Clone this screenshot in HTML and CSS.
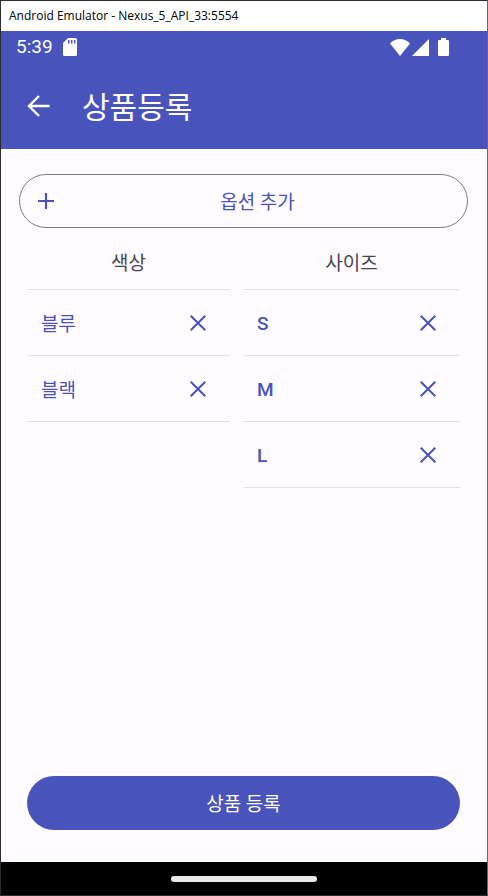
FILE: index.html
```html
<!DOCTYPE html>
<html lang="ko">
<head>
<meta charset="utf-8">
<meta name="viewport" content="width=device-width, initial-scale=1">
<title>Android Emulator - Nexus_5_API_33:5554</title>
<link rel="stylesheet" href="styles.css">
</head>
<body>
<div class="window">
  <div class="window-title">Android Emulator - Nexus_5_API_33:5554</div>
  <div class="status-bar">
    <span class="clock">5:39</span>
    <svg class="sd-icon" width="14" height="18" viewBox="0 0 14 18" aria-hidden="true"><path fill="currentColor" fill-rule="evenodd" d="M5 0h7.500Q14 0 14 1.500v15Q14 18 12.500 18h-11Q0 18 0 16.500V5zM5 2v3.500h1.500V2zM8 2v3.500h1.500V2zM11 2v3.500h1.500V2z"/></svg>
    <span class="status-icons">
      <svg width="20" height="17" viewBox="0 0 20 17" aria-hidden="true"><path fill="currentColor" d="M0 4.500Q4.200 0 10 0t10 4.500L10 17z"/></svg>
      <svg width="17" height="17" viewBox="0 0 17 17" aria-hidden="true"><path fill="currentColor" d="M17 0v17H0z"/></svg>
      <svg class="battery" width="11" height="18" viewBox="0 0 11 18" aria-hidden="true"><path fill="currentColor" d="M3 0h5v2h2q1 0 1 1v14q0 1-1 1H1q-1 0-1-1V3q0-1 1-1h2z"/></svg>
    </span>
  </div>
  <header class="app-bar">
    <button class="back" type="button" aria-label="뒤로"><svg width="23" height="22" viewBox="0 0 23 22" aria-hidden="true"><path fill="none" stroke="currentColor" stroke-width="2.400" d="M22.500 11H2.500M12 1L2 11l10 10"/></svg></button>
    <h1>상품등록</h1>
  </header>
  <main class="content">
    <button class="add-option" type="button"><svg width="16" height="16" viewBox="0 0 16 16" aria-hidden="true"><path fill="none" stroke="currentColor" stroke-width="2.200" d="M8 0v16M0 8h16"/></svg><span>옵션 추가</span></button>
    <div class="options">
      <section class="option-group">
        <h2>색상</h2>
        <ul>
          <li><span>블루</span><button class="remove" type="button" aria-label="블루 삭제"><svg width="16" height="16" viewBox="0 0 16 16" aria-hidden="true"><path d="M.7.7l14.600 14.600M15.300.7L.7 15.300"/></svg></button></li>
          <li><span>블랙</span><button class="remove" type="button" aria-label="블랙 삭제"><svg width="16" height="16" viewBox="0 0 16 16" aria-hidden="true"><path d="M.7.7l14.600 14.600M15.300.7L.7 15.300"/></svg></button></li>
        </ul>
      </section>
      <section class="option-group sizes">
        <h2>사이즈</h2>
        <ul>
          <li><span>S</span><button class="remove" type="button" aria-label="S 삭제"><svg width="16" height="16" viewBox="0 0 16 16" aria-hidden="true"><path d="M.7.7l14.600 14.600M15.300.7L.7 15.300"/></svg></button></li>
          <li><span>M</span><button class="remove" type="button" aria-label="M 삭제"><svg width="16" height="16" viewBox="0 0 16 16" aria-hidden="true"><path d="M.7.7l14.600 14.600M15.300.7L.7 15.300"/></svg></button></li>
          <li><span>L</span><button class="remove" type="button" aria-label="L 삭제"><svg width="16" height="16" viewBox="0 0 16 16" aria-hidden="true"><path d="M.7.7l14.600 14.600M15.300.7L.7 15.300"/></svg></button></li>
        </ul>
      </section>
    </div>
    <button class="submit" type="button">상품 등록</button>
  </main>
  <div class="nav-bar"><span class="nav-handle"></span></div>
</div>
</body>
</html>
```

FILE: styles.css
```css
:root {
  --primary: #4854bc;
  --surface: #fffbff;
  --divider: #e4dfe5;
}

* {
  box-sizing: border-box;
}

body {
  margin: 0;
  font-family: Roboto, "Noto Sans CJK KR", sans-serif;
  font-size: 19px;
  line-height: 28px;
}

button {
  padding: 0;
  border: 0;
  background: none;
  color: var(--primary);
  font: inherit;
  cursor: pointer;
}

svg {
  display: block;
  flex: none;
}

h1,
h2,
ul {
  margin: 0;
  padding: 0;
  font-size: inherit;
  font-weight: 400;
  list-style: none;
}

.window {
  display: flex;
  flex-direction: column;
  min-height: 100vh;
  border: 1px solid #2b2b30;
  border-right-color: #68686c;
  background: var(--surface);
}

.window-title {
  padding: 0 8px;
  background: #fff;
  color: #000;
  font-family: "Open Sans", sans-serif;
  font-size: 12px;
  line-height: 30px;
}

.status-bar {
  display: flex;
  align-items: center;
  height: 32px;
  padding: 0 38px 0 15px;
  background: var(--primary);
  color: #fff;
}

.sd-icon {
  margin-left: 10px;
}

.status-icons {
  display: flex;
  align-items: center;
  gap: 2px;
  margin-left: auto;
}

.battery {
  margin-left: 7px;
}

.app-bar {
  display: flex;
  align-items: center;
  gap: 32px;
  height: 86px;
  padding: 0 26px;
  background: var(--primary);
  color: #fff;
}

.app-bar h1 {
  padding-top: 4px;
  font-size: 30px;
  line-height: 40px;
}

.back {
  color: inherit;
}

.content {
  display: flex;
  flex: 1;
  flex-direction: column;
  padding: 25px 19px 32px 18px;
}

.add-option {
  display: flex;
  align-items: center;
  gap: 12px;
  height: 54px;
  padding: 0 18px;
  border: 1px solid #7b7983;
  border-radius: 27px;
}

.add-option span {
  flex: 1;
  padding-top: 4px;
}

.options {
  display: grid;
  grid-template-columns: 203fr 217fr;
  align-items: start;
  gap: 13px;
  margin: 0 8px;
}

.option-group h2 {
  padding: 22px 0 11px;
  border-bottom: 1px solid var(--divider);
  color: #47464f;
  text-align: center;
}

.option-group li {
  display: flex;
  align-items: center;
  justify-content: space-between;
  height: 66px;
  padding: 0 24px 0 14px;
  border-bottom: 1px solid var(--divider);
  color: var(--primary);
}

.option-group li span {
  padding-top: 4px;
}

.sizes li {
  font-weight: 500;
}

.option-group.sizes li span {
  padding-top: 2px;
}

.remove path {
  fill: none;
  stroke: currentColor;
  stroke-width: 2;
}

.submit {
  height: 54px;
  margin: auto 8px 0;
  padding-top: 4px;
  border-radius: 27px;
  background: var(--primary);
  color: #fff;
}

.nav-bar {
  display: flex;
  align-items: center;
  justify-content: center;
  height: 33px;
  background: #000;
}

.nav-handle {
  width: 30%;
  height: 6px;
  border-radius: 3px;
  background: #e8e8e8;
}
```
